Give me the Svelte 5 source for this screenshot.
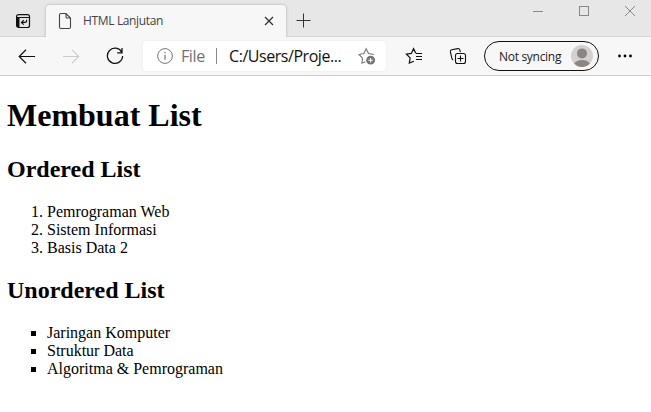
<script>
  const orderedItems = ['Pemrograman Web', 'Sistem Informasi', 'Basis Data 2'];
  const unorderedItems = ['Jaringan Komputer', 'Struktur Data', 'Algoritma & Pemrograman'];
</script>

<div class="window">
  <header class="tabs">
    <svg class="tab-actions" width="16" height="16" viewBox="0 0 16 16" fill="none" stroke="#111">
      <rect x="1.6" y="1.6" width="12.9" height="12.9" rx="2" stroke-width="1.2" />
      <path d="M1.5 4.5h13" stroke-width="1" />
      <path d="M2 5h2v9H3.2L2 13z" fill="#111" stroke-width="1" />
      <path d="M11.6 6.8v1q0 1.6-1.6 1.6H6.7M8.7 7.2 6.5 9.4l2.2 2.2" stroke-width="1.2" />
    </svg>
    <div class="tab">
      <svg class="document" width="14" height="18" viewBox="0 0 14 18" fill="none" stroke="#444" stroke-width="1.1">
        <path d="M8 1.5H3Q1.5 1.5 1.5 3v12Q1.5 16.5 3 16.5h8q1.5 0 1.5-1.5V6zM8 1.5V5q0 1 1 1h3.5" />
      </svg>
      <span class="title">HTML Lanjutan</span>
      <svg class="close" width="10" height="10" viewBox="0 0 10 10" stroke="#333" stroke-width="1.3"><path d="m1 1 8 8M9 1 1 9" /></svg>
    </div>
    <svg class="new-tab" width="15" height="15" viewBox="0 0 15 15" stroke="#333"><path d="M7.5.5v14M.5 7.5h14" /></svg>
    <div class="controls">
      <svg width="10" height="10" viewBox="0 0 10 10" stroke="#888" fill="none"><path d="M0 5.5h10" /></svg>
      <svg width="10" height="10" viewBox="0 0 10 10" stroke="#888" fill="none"><rect x=".5" y=".5" width="9" height="9" /></svg>
      <svg width="10" height="10" viewBox="0 0 10 10" stroke="#888" fill="none"><path d="m0 0 10 10M10 0 0 10" /></svg>
    </div>
  </header>

  <nav class="toolbar">
    <svg class="back" width="17" height="15" viewBox="0 0 17 15" fill="none" stroke="#111" stroke-width="1.2"><path d="M17 7.5H1.5M8 .8 1.2 7.5 8 14.2" /></svg>
    <svg class="forward" width="17" height="15" viewBox="0 0 17 15" fill="none" stroke="#cbcbcb" stroke-width="1.1"><path d="M0 7.5h15.5M9 .8l6.8 6.7L9 14.2" /></svg>
    <svg class="reload" width="18" height="18" viewBox="0 0 18 18" fill="none" stroke="#111" stroke-width="1.25"><path d="M15.7 5.2A7.6 7.6 0 1 0 16.6 9M16 1v4.8h-4.8" /></svg>
    <div class="address">
      <svg class="info" width="16" height="16" viewBox="0 0 16 16" fill="none" stroke="#777"><circle cx="8" cy="8" r="7.4" /><path d="M8 6.8v5M8 4v1.2" stroke-width="1.2" /></svg>
      <span class="scheme">File</span>
      <span class="separator"></span>
      <span class="path">C:/Users/Proje...</span>
      <svg class="favorite" width="18" height="18" viewBox="0 0 18 18" fill="none" stroke="#777" stroke-width="1.1">
        <path d="M7.4 14.7 3.9 16.2l.6-5.1L1 7.5l4.8-.9L8.2 1.8l2.3 4.8 5.4.9" />
        <circle cx="12.6" cy="13.2" r="4.4" fill="#737373" stroke="none" />
        <path d="M12.6 10.9v4.6M10.3 13.2h4.6" stroke="#fff" />
      </svg>
    </div>
    <svg class="favorites" width="18" height="18" viewBox="0 0 18 18" fill="none" stroke="#111" stroke-width="1.2">
      <path d="m8.8 14.2-4.5 1.9.8-5.2L1.4 7.2l4.9-.8 2.3-4.7 2.2 4.5M11 6.5h6M11 9.5h6M11 12.5h6" />
    </svg>
    <svg class="collections" width="18" height="18" viewBox="0 0 18 18" fill="none" stroke="#111" stroke-width="1.1">
      <path d="M4.2 12.9q-1-.3-1.3-1.5L1.4 5q-.4-1.7 1.2-2.2l6.2-1.2q1.5-.3 1.9 1.1l.7 2.3" />
      <rect x="6.5" y="6.5" width="10" height="10" rx="2" />
      <path d="M11.5 8.5v6M8.5 11.5h6" />
    </svg>
    <div class="profile">
      <span>Not syncing</span>
      <svg width="22" height="22" viewBox="0 0 22 22">
        <circle cx="11" cy="11" r="11" fill="#d3d1cf" />
        <circle cx="11" cy="8.4" r="5" fill="#898683" />
        <path d="M3.2 18.8Q5.1 15 11 15t7.8 3.8A11 11 0 0 1 3.2 18.8" fill="#898683" />
      </svg>
    </div>
    <svg class="more" width="14" height="4" viewBox="0 0 14 4" fill="#000"><circle cx="1.5" cy="2" r="1.4" /><circle cx="7" cy="2" r="1.4" /><circle cx="12.5" cy="2" r="1.4" /></svg>
  </nav>

  <main>
    <h1>Membuat List</h1>
    <h2>Ordered List</h2>
    <ol>{#each orderedItems as item}<li>{item}</li>{/each}</ol>
    <h2>Unordered List</h2>
    <ul>{#each unorderedItems as item}<li>{item}</li>{/each}</ul>
  </main>
</div>

<style>
  :global(body) { margin: 0; background: #fff; }
  .window { width: 651px; height: 412px; overflow: hidden; background: #fff; }
  svg { display: block; flex: none; }
  span { white-space: nowrap; }
  .tabs { display: flex; box-sizing: border-box; height: 37px; background: #e7e7e7; border-bottom: 1px solid #d5d5d5; font-family: "Open Sans", "Noto Sans", sans-serif; }
  .tab-actions { margin: 13px 0 0 15px; }
  .tab { display: flex; box-sizing: border-box; width: 240px; height: 32px; margin: 5px 0 0 15px; background: #f7f7f7; border-radius: 4px 4px 0 0; box-shadow: 0 0 3px #aaa; clip-path: inset(-4px -4px 0 -4px); }
  .document { margin: 7px 0 0 12px; }
  .title { width: 80px; margin: 7px 0 0 11px; color: #444; font-size: 12px; line-height: 18px; letter-spacing: -0.35px; }
  .close { margin: 11px 0 0 101px; }
  .new-tab { margin: 13px 0 0 10px; }
  .controls { display: flex; gap: 36px; margin: 6px 0 0 222px; }
  .toolbar { display: flex; align-items: center; box-sizing: border-box; height: 39px; background: #f7f7f7; border-bottom: 1px solid #cdcdcd; font-family: "Open Sans", "Noto Sans", sans-serif; }
  .back { margin-left: 18px; }
  .forward { margin-left: 28px; }
  .reload { margin-left: 26px; }
  .address { display: flex; align-items: center; width: 243px; height: 30px; margin-left: 19px; background: #fff; border-radius: 4px; box-shadow: 0 0 2px #e4e4e4; font-size: 16px; line-height: 22px; }
  .info { margin-left: 14px; }
  .scheme { width: 24px; margin-left: 8px; color: #707070; letter-spacing: -0.4px; }
  .separator { width: 1px; height: 16px; margin-left: 11px; background: #888; }
  .path { width: 113px; margin-left: 12px; color: #111; letter-spacing: -0.45px; }
  .favorite { margin-left: 16px; }
  .favorites { margin-left: 19px; }
  .collections { margin-left: 26px; }
  .profile { display: flex; align-items: center; box-sizing: border-box; width: 115px; height: 30px; margin-left: 17px; padding-left: 14px; border: 1px solid #111; border-radius: 15px; color: #222; font-size: 12px; }
  .profile span { width: 64px; letter-spacing: -0.3px; }
  .profile svg { margin-left: 8px; }
  .more { margin-left: 19px; }
  main { display: flow-root; padding-left: 7px; color: #000; font-family: "Liberation Serif", "Times New Roman", serif; font-size: 16px; line-height: 18px; }
  h1 { margin: 21px 0 22px; font-size: 32px; line-height: 37px; }
  h2 { margin: 20px 0; font-size: 24px; line-height: 27px; }
  ol, ul { margin: 16px 0; padding-left: 40px; }
  ul { list-style: square; }
</style>
